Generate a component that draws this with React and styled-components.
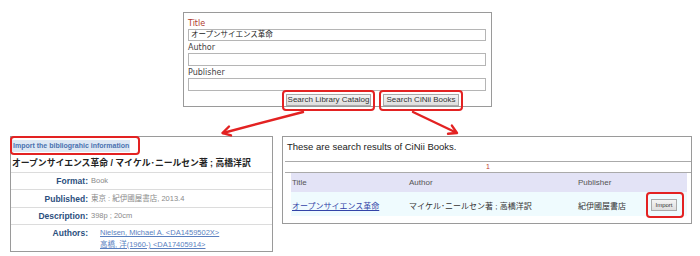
import React from "react";
import styled, { createGlobalStyle } from "styled-components";

const RED = "#e32222";
const JP = `"Liberation Sans", "Noto Sans CJK JP", sans-serif`;

const GlobalStyle = createGlobalStyle`
  html, body {
    margin: 0;
    padding: 0;
    background: #fff;
  }
  body {
    width: 700px;
    height: 256px;
    overflow: hidden;
    font-family: ${JP};
  }
`;

const Page = styled.div`
  position: relative;
  width: 700px;
  height: 256px;
  box-sizing: border-box;
  padding-top: 12px;
`;

// search form at the top
const FormBox = styled.div`
  margin-left: 183px;
  width: 309px;
  height: 95px;
  box-sizing: border-box;
  border: 1px solid #9a9a9a;
  padding: 5px 5px 0 4px;
`;

const FieldLabel = styled.div`
  font-family: "DejaVu Sans", sans-serif;
  font-size: 8px;
  line-height: 11px;
  color: ${p => (p.$accent ? "#b03a2e" : "#444")};
  margin-top: ${p => (p.$first ? "0" : "1px")};
`;

const TextInput = styled.div`
  height: ${p => p.$h || 13}px;
  box-sizing: border-box;
  border: 1px solid #b5b5b5;
  font-family: ${JP};
  font-size: 7.5px;
  line-height: 10px;
  padding-left: 2px;
  color: #222;
`;

const ButtonRow = styled.div`
  display: flex;
  gap: 4px;
  margin: -1px 0 0 94px;
`;

const Callout = styled.span`
  display: inline-flex;
  align-items: center;
  border: 2px solid ${RED};
  border-radius: 4px;
  padding: ${p => p.$pad || "2px"};
  box-sizing: border-box;
`;

const Button = styled.button`
  width: ${p => p.$w}px;
  height: 12px;
  padding: 0;
  border: 1px solid #aaa;
  background: linear-gradient(#f4f4f4, #dedede);
  font-family: "Liberation Sans", sans-serif;
  font-size: ${p => p.$fs || 8}px;
  line-height: 10px;
  color: #333;
`;

const BottomRow = styled.div`
  display: flex;
  align-items: flex-start;
  gap: 9px;
  margin: 29px 0 0 10px;
`;

// library catalog detail
const DetailPanel = styled.div`
  width: 263px;
  height: 116px;
  box-sizing: border-box;
  border: 1px solid #9a9a9a;
`;

const TopCallout = styled(Callout)`
  display: flex;
  width: fit-content;
  margin: -1px 0 0 -1px;
  padding: 2px 8px 1px 0;
`;

const Highlight = styled.span`
  background: #dde7f3;
  color: #4a72b0;
  font-family: "Liberation Sans", sans-serif;
  font-weight: bold;
  font-size: 7px;
  line-height: 12px;
  padding: 0 1px;
  white-space: nowrap;
`;

const BookTitle = styled.div`
  font-family: ${JP};
  font-weight: bold;
  font-size: 8.8px;
  line-height: 12px;
  height: 12px;
  color: #222;
  margin: 2px 0 3px 1px;
  white-space: nowrap;
`;

const InfoRow = styled.div`
  display: grid;
  grid-template-columns: 77px 1fr;
  column-gap: 3px;
  box-sizing: border-box;
  height: ${p => p.$h}px;
  border-top: 1px solid #dcdcdc;
  padding-top: ${p => (p.$tall ? "3px" : "0")};
  align-items: ${p => (p.$tall ? "start" : "center")};
`;

const InfoLabel = styled.div`
  text-align: right;
  font-family: "Liberation Sans", sans-serif;
  font-weight: bold;
  font-size: 8.5px;
  line-height: 10px;
  color: #2c4f7e;
`;

const InfoValue = styled.div`
  font-family: ${JP};
  font-size: 7.5px;
  line-height: ${p => (p.$links ? "12px" : "10px")};
  color: #8a8a8a;
  margin-left: ${p => (p.$links ? "9px" : "0")};
  margin-top: ${p => (p.$links ? "-1px" : "0")};
  white-space: nowrap;
`;

const AuthorLink = styled.a`
  display: block;
  color: #5a7fbf;
  text-decoration: underline;
`;

// CiNii result list
const ResultPanel = styled.div`
  width: 410px;
  height: 88px;
  box-sizing: border-box;
  border: 1px solid #9a9a9a;
`;

const Caption = styled.div`
  font-family: "Liberation Sans", sans-serif;
  font-size: 9.5px;
  line-height: 14px;
  color: #222;
  padding: 3px 0 0 4px;
  margin-bottom: 7px;
`;

const Pager = styled.div`
  margin-left: 2px;
  height: 12px;
  box-sizing: border-box;
  border-top: 1px solid #aaa;
  border-bottom: 1px solid #aaa;
  text-align: center;
  font-family: "Liberation Sans", sans-serif;
  font-size: 7px;
  line-height: 10px;
  color: #c0392b;
`;

const ResultTable = styled.div`
  margin: 0 4px 0 8px;
`;

const TableRow = styled.div`
  display: grid;
  grid-template-columns: 118px 169px 68px 41px;
  align-items: center;
  height: ${p => (p.$head ? 19 : 24)}px;
  background: ${p => (p.$head ? "#e3e3f6" : "#effbfe")};
  font-family: ${JP};
  font-size: 8px;
  color: ${p => (p.$head ? "#555" : "#333")};
`;

const Cell = styled.div`
  padding-left: ${p => (p.$first ? "1px" : "0")};
  white-space: nowrap;
`;

const TitleLink = styled.a`
  color: #3344a8;
  text-decoration: underline;
`;

const Overlay = styled.svg`
  position: absolute;
  left: 0;
  top: 0;
  pointer-events: none;
`;

const Arrows = () => (
  <Overlay width="700" height="256" viewBox="0 0 700 256">
    <g stroke={RED} strokeWidth="2.4" fill="none" strokeLinecap="round" strokeLinejoin="round">
      <line x1="303" y1="112" x2="223" y2="133" />
      <polyline points="229,126.5 222.5,133 231,135.4" />
      <line x1="413" y1="112" x2="456" y2="132.5" />
      <polyline points="451.9,125.6 457,133 448,133.8" />
    </g>
  </Overlay>
);

export default function App() {
  return (
    <Page>
      <GlobalStyle />
      <FormBox>
        <FieldLabel $first $accent>Title</FieldLabel>
        <TextInput $h={12}>オープンサイエンス革命</TextInput>
        <FieldLabel>Author</FieldLabel>
        <TextInput />
        <FieldLabel>Publisher</FieldLabel>
        <TextInput />
        <ButtonRow>
          <Callout $pad="2px 2px 3px 2px">
            <Button $w={85}>Search Library Catalog</Button>
          </Callout>
          <Callout $pad="2px 2px 3px 2px">
            <Button $w={76}>Search CiNii Books</Button>
          </Callout>
        </ButtonRow>
      </FormBox>

      <BottomRow>
        <DetailPanel>
          <TopCallout>
            <Highlight>Import the bibliograhic information</Highlight>
          </TopCallout>
          <BookTitle>オープンサイエンス革命 / マイケル･ニールセン著 ; 高橋洋訳</BookTitle>
          <InfoRow $h={17}>
            <InfoLabel>Format:</InfoLabel>
            <InfoValue>Book</InfoValue>
          </InfoRow>
          <InfoRow $h={18}>
            <InfoLabel>Published:</InfoLabel>
            <InfoValue>東京 : 紀伊國屋書店, 2013.4</InfoValue>
          </InfoRow>
          <InfoRow $h={17}>
            <InfoLabel>Description:</InfoLabel>
            <InfoValue>398p ; 20cm</InfoValue>
          </InfoRow>
          <InfoRow $h={28} $tall>
            <InfoLabel>Authors:</InfoLabel>
            <InfoValue $links>
              <AuthorLink>Nielsen, Michael A. &lt;DA1459502X&gt;</AuthorLink>
              <AuthorLink>高橋, 洋(1960-) &lt;DA17405914&gt;</AuthorLink>
            </InfoValue>
          </InfoRow>
        </DetailPanel>

        <ResultPanel>
          <Caption>These are search results of CiNii Books.</Caption>
          <Pager>1</Pager>
          <ResultTable>
            <TableRow $head>
              <Cell $first>Title</Cell>
              <Cell>Author</Cell>
              <Cell>Publisher</Cell>
              <Cell />
            </TableRow>
            <TableRow>
              <Cell $first>
                <TitleLink>オープンサイエンス革命</TitleLink>
              </Cell>
              <Cell>マイケル･ニールセン著 ; 高橋洋訳</Cell>
              <Cell>紀伊國屋書店</Cell>
              <Cell>
                <Callout $pad="5px 5px 5px 3px">
                  <Button $w={26} $fs={6}>Import</Button>
                </Callout>
              </Cell>
            </TableRow>
          </ResultTable>
        </ResultPanel>
      </BottomRow>

      <Arrows />
    </Page>
  );
}
